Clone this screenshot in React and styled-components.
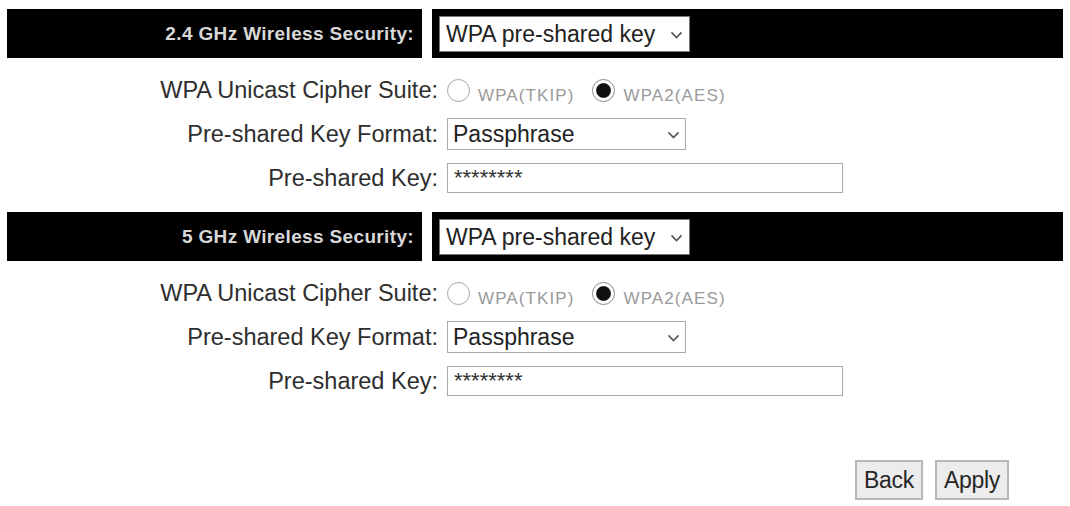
import React from "react";
import styled, { createGlobalStyle } from "styled-components";

const Global = createGlobalStyle`
  html, body { margin: 0; padding: 0; background: #fff; }
  body { font-family: "Liberation Sans", Arial, sans-serif; }
`;

const Page = styled.div`
  width: 1070px;
  height: 506px;
  box-sizing: border-box;
  padding: 9px 7px 0 7px;
  background: #fff;
  overflow: hidden;
`;

const Section = styled.section`
  display: flex;
  flex-direction: column;
`;

const HeaderRow = styled.div`
  display: flex;
  gap: 10px;
  height: 49px;
`;

const HeaderLabelCell = styled.div`
  width: 415px;
  box-sizing: border-box;
  background: #000;
  display: flex;
  align-items: center;
  justify-content: flex-end;
  padding-right: 8px;
  color: #d8d8d8;
  font-weight: bold;
  font-size: 19px;
  letter-spacing: 0.35px;
`;

const HeaderValueCell = styled.div`
  flex: 1;
  background: #000;
  display: flex;
  align-items: center;
  padding-left: 7px;
`;

const Rows = styled.div`
  display: flex;
  flex-direction: column;
  padding: 10px 0 12px 0;
`;

const Row = styled.div`
  display: flex;
  align-items: center;
  height: 44px;
  gap: 9px;
`;

const Label = styled.div`
  width: 431px;
  flex: none;
  text-align: right;
  font-size: 23.5px;
  color: #2e2e2e;
  white-space: nowrap;
`;

const SelectWrap = styled.div`
  position: relative;
  display: flex;
  width: ${(p) => p.$width}px;
  height: ${(p) => p.$height}px;
`;

const Select = styled.select`
  appearance: none;
  -webkit-appearance: none;
  width: 100%;
  height: 100%;
  box-sizing: border-box;
  margin: 0;
  padding: 0 0 0 ${(p) => p.$pad}px;
  background: #fff;
  border: 1px solid ${(p) => p.$border};
  border-radius: 0;
  font-family: "Liberation Sans", Arial, sans-serif;
  font-size: 23px;
  color: #222;
  outline: none;
`;

const Chevron = styled.svg`
  position: absolute;
  right: ${(p) => p.$right}px;
  top: 50%;
  transform: translateY(-35%);
  pointer-events: none;
`;

const TextInput = styled.input`
  width: 396px;
  height: 30px;
  box-sizing: border-box;
  margin: 0;
  padding: 0 6px;
  border: 1px solid #a9a9a9;
  font-family: "Liberation Sans", Arial, sans-serif;
  font-size: 22px;
  color: #333;
  background: #fff;
  outline: none;
  line-height: 30px;
`;

const RadioGroup = styled.div`
  display: flex;
  align-items: flex-end;
  padding-top: 4px;
`;

const RadioOption = styled.label`
  display: flex;
  align-items: flex-end;
  gap: 8px;
  margin-right: 18px;
  font-size: 17px;
  letter-spacing: 1.1px;
  color: #9a9a9a;
`;

const Radio = styled.input`
  appearance: none;
  -webkit-appearance: none;
  flex: none;
  margin: 0 0 4px 0;
  width: 23px;
  height: 23px;
  border-radius: 50%;
  box-sizing: border-box;
  border: 1.5px solid ${(p) => (p.checked ? "#8a8a8a" : "#a8a8a8")};
  background: ${(p) =>
    p.checked ? "radial-gradient(circle, #111 0 46%, #fff 53%)" : "#fff"};
`;

const ButtonBar = styled.div`
  display: flex;
  justify-content: flex-end;
  gap: 12px;
  padding-right: 54px;
  margin-top: 45px;
`;

const Button = styled.button`
  width: ${(p) => p.$width}px;
  height: 40px;
  padding: 0;
  box-sizing: border-box;
  background: #ececec;
  border: 2px solid #b8b8b8;
  border-radius: 0;
  font-family: "Liberation Sans", Arial, sans-serif;
  font-size: 23px;
  letter-spacing: -0.3px;
  color: #262626;
`;

function ChevronIcon({ right }) {
  return (
    <Chevron $right={right} width="13" height="8" viewBox="0 0 13 8">
      <path d="M1.5 1.2 L6.5 6.3 L11.5 1.2" fill="none" stroke="#555" strokeWidth="1.6" />
    </Chevron>
  );
}

function SecuritySection({ band, name }) {
  return (
    <Section>
      <HeaderRow>
        <HeaderLabelCell>{band} Wireless Security:</HeaderLabelCell>
        <HeaderValueCell>
          <SelectWrap $width={251} $height={36}>
            <Select $pad={6} $border="#777" defaultValue="psk">
              <option value="psk">WPA pre-shared key</option>
            </Select>
            <ChevronIcon right={7} />
          </SelectWrap>
        </HeaderValueCell>
      </HeaderRow>
      <Rows>
        <Row>
          <Label>WPA Unicast Cipher Suite:</Label>
          <RadioGroup>
            <RadioOption>
              <Radio type="radio" name={name} disabled checked={false} readOnly />
              WPA(TKIP)
            </RadioOption>
            <RadioOption>
              <Radio type="radio" name={name} disabled checked readOnly />
              WPA2(AES)
            </RadioOption>
          </RadioGroup>
        </Row>
        <Row>
          <Label>Pre-shared Key Format:</Label>
          <SelectWrap $width={239} $height={32}>
            <Select $pad={5} $border="#a9a9a9" defaultValue="pass">
              <option value="pass">Passphrase</option>
            </Select>
            <ChevronIcon right={6} />
          </SelectWrap>
        </Row>
        <Row>
          <Label>Pre-shared Key:</Label>
          <TextInput type="text" defaultValue="********" />
        </Row>
      </Rows>
    </Section>
  );
}

export default function App() {
  return (
    <>
      <Global />
      <Page>
        <SecuritySection band="2.4 GHz" name="cipher24" />
        <SecuritySection band="5 GHz" name="cipher5" />
        <ButtonBar>
          <Button $width={68}>Back</Button>
          <Button $width={74}>Apply</Button>
        </ButtonBar>
      </Page>
    </>
  );
}
